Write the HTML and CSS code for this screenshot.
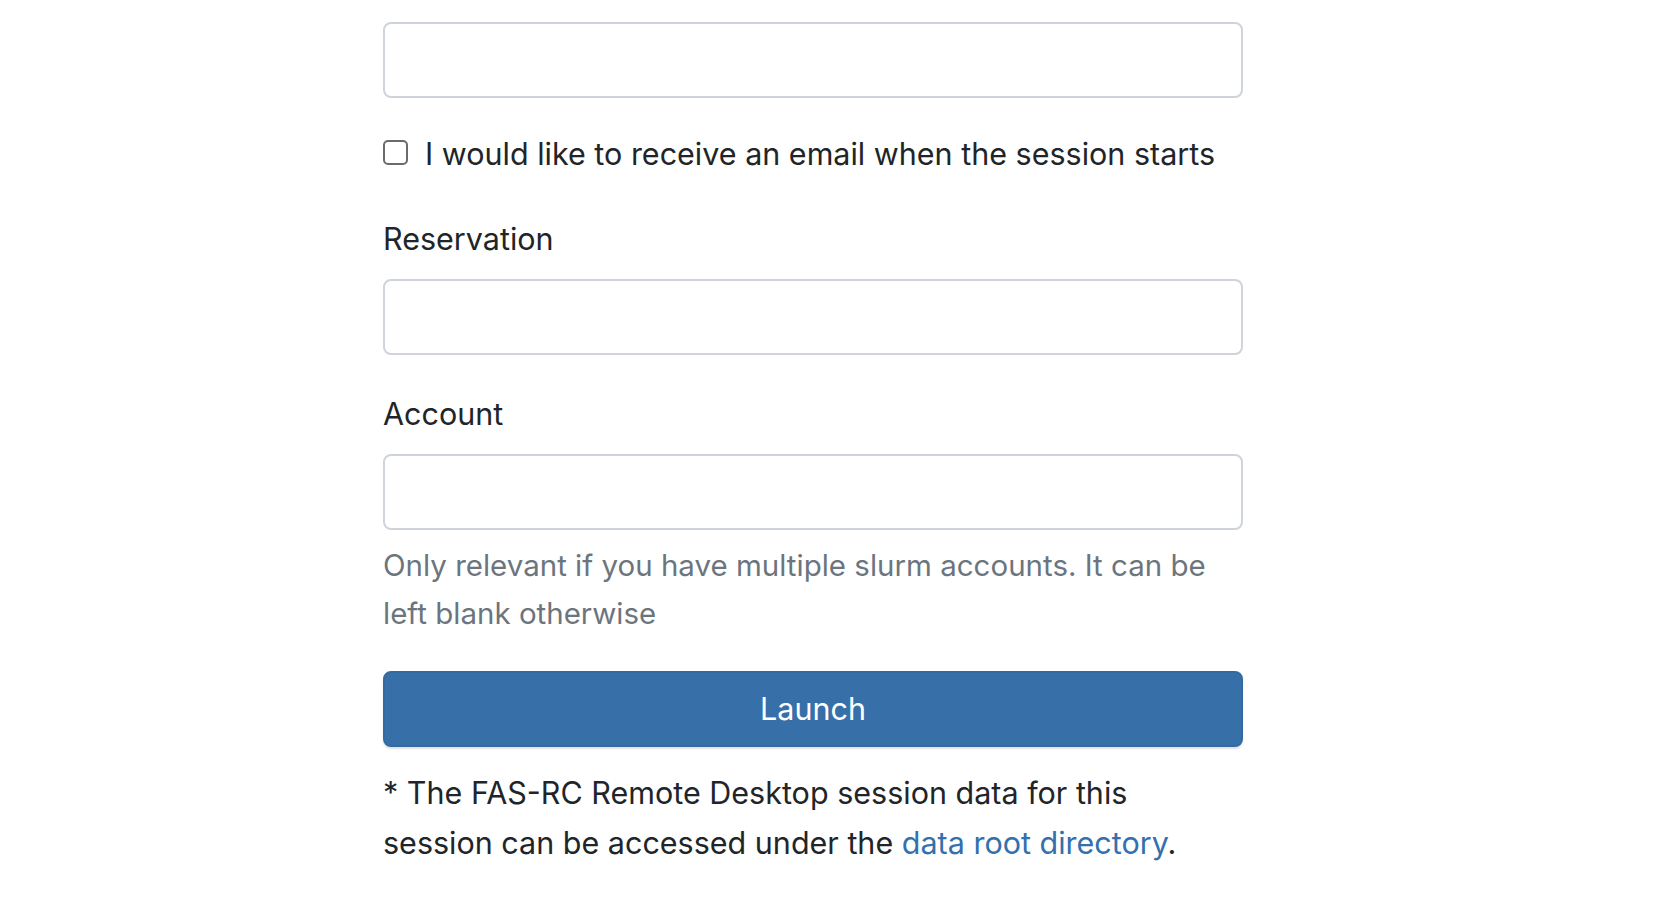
FILE: index.html
```html
<!DOCTYPE html>
<html lang="en">
<head>
<meta charset="utf-8">
<title>Launch session</title>
<link rel="stylesheet" href="styles.css">
</head>
<body>
<main class="page">
  <form class="session-form">
    <div class="form-group">
      <input class="form-control" type="text" aria-label="Email">
    </div>
    <div class="form-group form-check">
      <input class="check-input" type="checkbox" id="email-notify">
      <label class="check-label" for="email-notify">I would like to receive an email when the session starts</label>
    </div>
    <div class="form-group group-reservation">
      <label class="field-label" for="reservation">Reservation</label>
      <input class="form-control" type="text" id="reservation">
    </div>
    <div class="form-group group-account">
      <label class="field-label" for="account">Account</label>
      <input class="form-control" type="text" id="account">
      <small class="form-text">Only relevant if you have multiple slurm accounts. It can be left blank otherwise</small>
    </div>
    <button class="btn-launch" type="button">Launch</button>
  </form>
  <p class="footnote">* The FAS-RC Remote Desktop session data for this session can be accessed under the <a href="#" class="link">data root directory</a>.</p>
</main>
</body>
</html>
```
FILE: styles.css
```css
html, body {
  margin: 0;
  padding: 0;
  background: #fff;
}
body {
  font-family: Inter, "Liberation Sans", sans-serif;
  font-size: 30.5px;
  line-height: 48px;
  color: #212529;
}
.page {
  width: 860px;
  margin-left: 383px;
  padding-top: 22px;
}
.session-form {
  margin: 0;
}
.form-group {
  margin-bottom: 32px;
}
.form-control {
  display: block;
  box-sizing: border-box;
  width: 100%;
  height: 76px;
  margin: 0;
  padding: 12px 24px;
  font: inherit;
  color: #495057;
  background: #fff;
  border: 2px solid #ced4da;
  border-radius: 8px;
  outline: none;
}
.form-check {
  position: relative;
  padding-left: 42px;
  margin-bottom: 37px;
}
.group-reservation {
  margin-bottom: 35px;
}
.group-account {
  margin-bottom: 34px;
}
.check-input {
  position: absolute;
  left: 0;
  top: 10px;
  margin: 0;
  width: 25px;
  height: 25px;
  appearance: none;
  -webkit-appearance: none;
  box-sizing: border-box;
  border: 2px solid #6b6b6b;
  border-radius: 5px;
  background: #fff;
}
.check-label {
  display: inline-block;
}
.field-label {
  display: inline-block;
  margin-bottom: 16px;
}
.form-text {
  display: block;
  margin-top: 11px;
  font-size: 29.5px;
  color: #6c757d;
}
.btn-launch {
  display: block;
  box-sizing: border-box;
  width: 100%;
  height: 76px;
  margin: 0;
  padding: 0;
  font: inherit;
  color: #fff;
  background: #376fa9;
  border: 2px solid #346aa2;
  border-radius: 8px;
  box-shadow: 0 2px 2px rgba(0,0,0,0.12);
}
.footnote {
  margin: 21px 0 0;
  line-height: 50px;
}
.link {
  color: #3370ad;
  text-decoration: none;
}
```
